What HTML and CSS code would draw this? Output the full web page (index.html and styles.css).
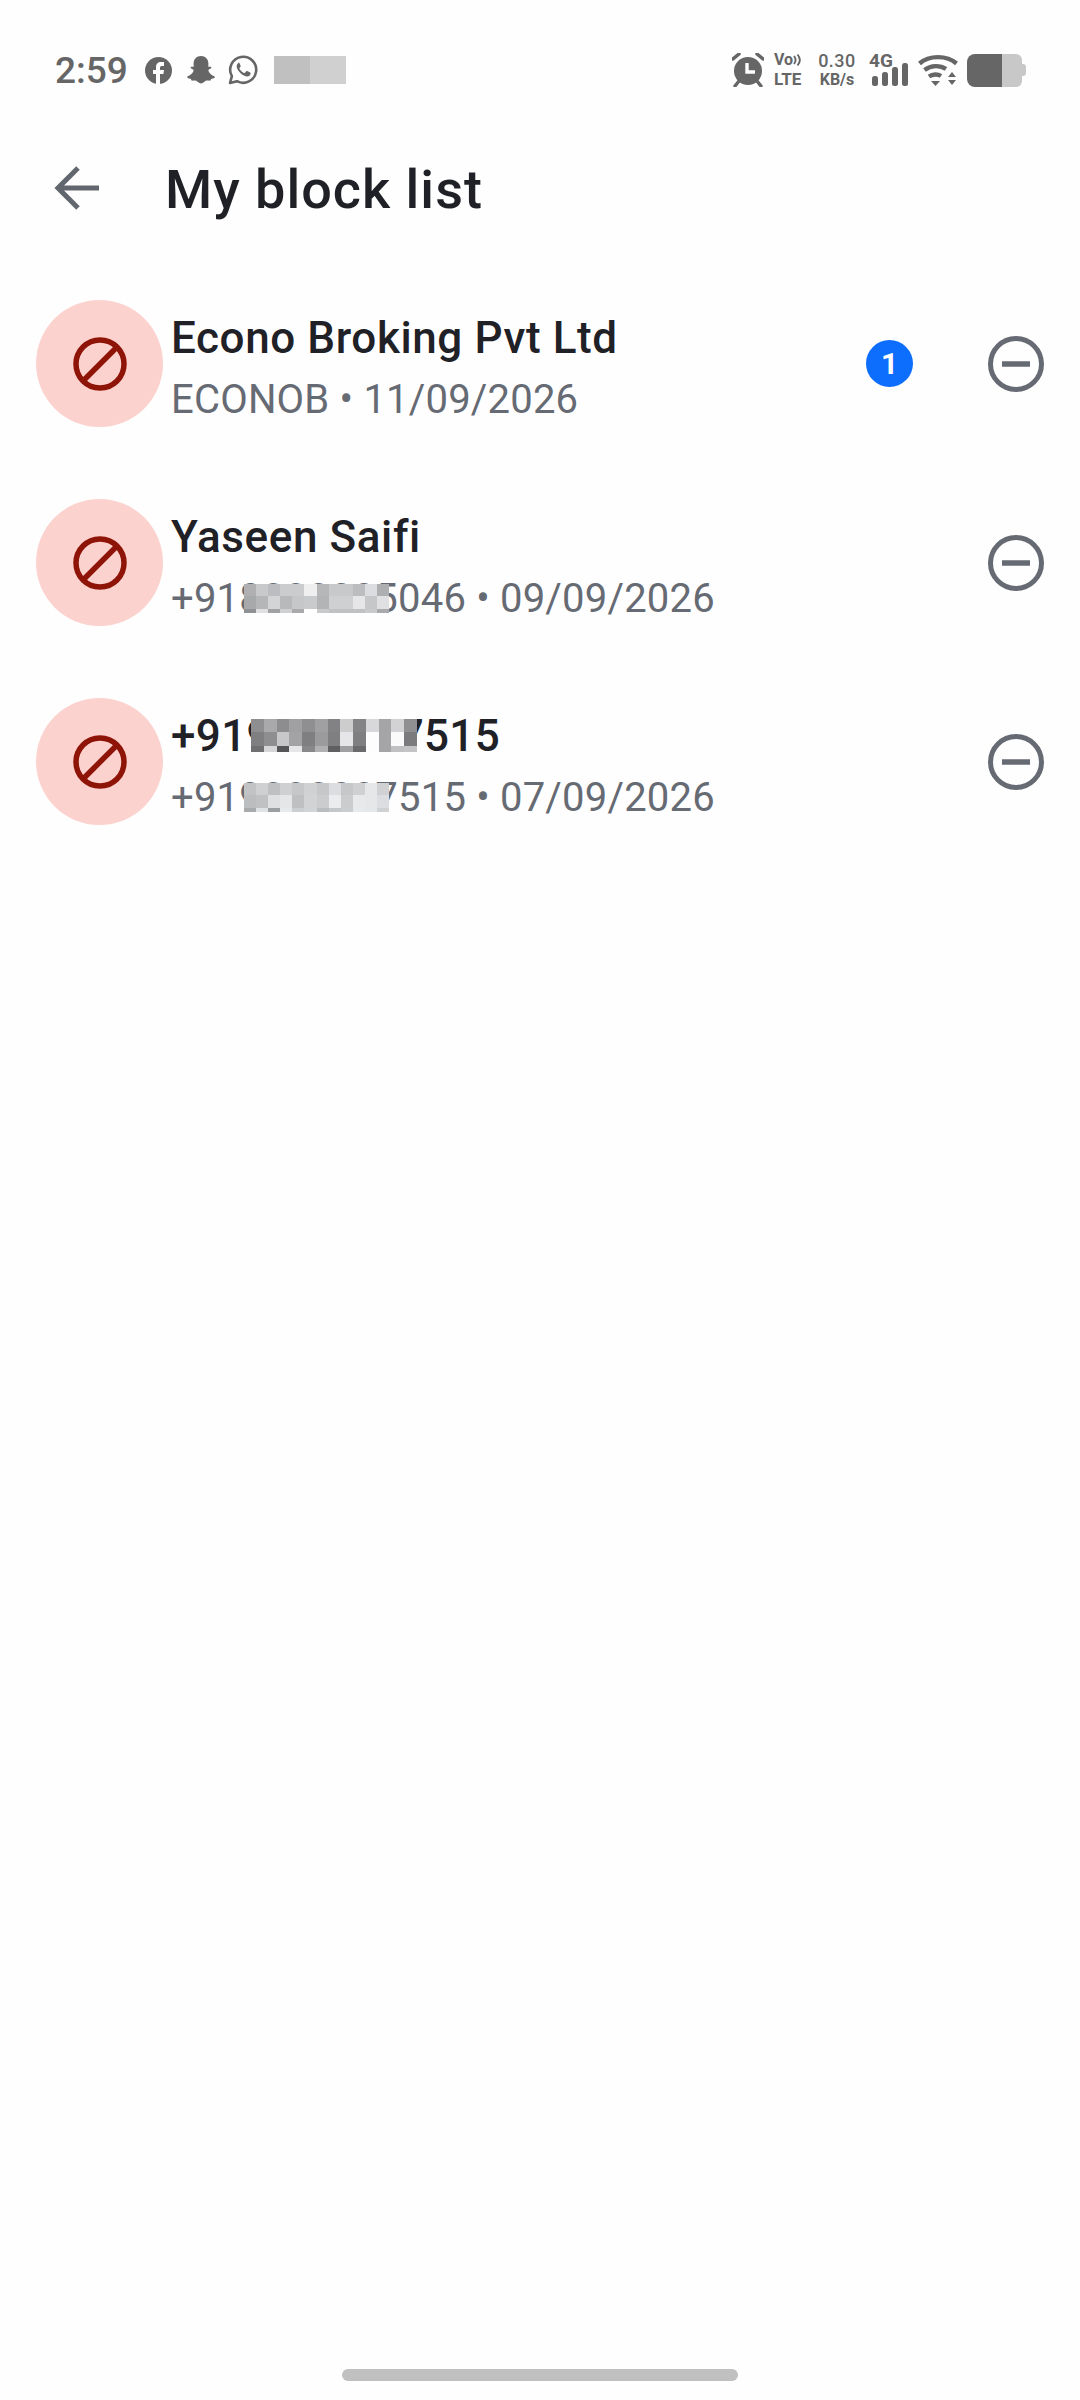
FILE: index.html
```html
<!DOCTYPE html>
<html lang="en">
<head>
    <meta charset="UTF-8">
    <meta name="viewport" content="width=device-width, initial-scale=1.0">
    <title>My block list</title>
    <link rel="stylesheet" href="styles.css">
</head>
<body>

    <div class="status-bar">
        <div class="status-left">
            <span class="time">2:59</span>
            <svg class="icon-fb" width="27" height="27" viewBox="0 0 27 27">
                <circle cx="13.5" cy="13.5" r="13.5" fill="#666"/>
                <path d="M11 27V17H8v-4h3v-3c0-3 2-5 5-5h3v4h-2c-1.300 0-2 .6-2 2v2h4l-.6 4H15v10z" fill="#fff"/>
            </svg>
            <svg class="icon-snap" width="28" height="28" viewBox="0 0 28 28">
                <path d="M14 0c4.500 0 7.400 3.300 7.400 7.500 0 1.300-.1 2.500-.1 3.300.8.300 2-.5 2.700 0 .8.600.3 1.600-.6 2-1 .4-2 .8-2 1.500.3 2.300 3 5 5.800 5.900.8.300.8 1.100.2 1.600-.8.600-2.200.8-3.300 1.100-.4.700-.3 1.600-1 1.700-1.300.2-2.800-.3-4.300.2-1.400.5-2.600 2.700-4.800 2.700s-3.400-2.200-4.800-2.700c-1.500-.5-3-.000-4.300-.2-.7-.1-.6-1-1-1.700-1.100-.3-2.500-.5-3.300-1.100-.6-.5-.6-1.300.2-1.600 2.800-.9 5.500-3.600 5.800-5.900 0-.7-1-1.100-2-1.500-.9-.4-1.400-1.400-.6-2 .7-.5 1.900.3 2.700 0 0-.8-.1-2-.1-3.300C6.600 3.300 9.500 0 14 0z" fill="#666"/>
            </svg>
            <svg class="icon-wa" width="30" height="30" viewBox="0 0 30 30">
                <path d="M2 28l1.900-6.800A13 13 0 1 1 9 26.200z" fill="none" stroke="#666" stroke-width="2.600" stroke-linejoin="round"/>
                <path d="M10.800 7.800c-1 .4-2.300 2-2.100 4 .3 3.600 5.600 9.300 10 9.700 2 .2 3.700-1.200 3.900-2.700.1-.6 0-1-.4-1.200l-3-1.500c-.5-.2-.8-.1-1.100.3l-1.100 1.400c-.3.300-.6.300-1 .2-1.900-.8-3.500-2.300-4.500-4.200-.2-.4-.1-.7.100-.9l.9-1.100c.2-.3.300-.6.100-1l-1.200-2.900c-.3-.6-.8-.6-1.600-.1z" fill="#666"/>
            </svg>
            <div class="status-blur">
                <div class="blur-dark"></div>
                <div class="blur-light"></div>
            </div>
        </div>
        <div class="status-right">
            <svg class="icon-alarm" width="32" height="34" viewBox="0 0 32 34">
                <circle cx="16" cy="18" r="14" fill="#666"/>
                <path d="M15 10v9h8" fill="none" stroke="#fff" stroke-width="3.400"/>
                <path d="M1 6l6-5M31 6l-6-5M3 33l4-5M29 33l-4-5" fill="none" stroke="#666" stroke-width="3.400" stroke-linecap="round"/>
            </svg>
            <div class="volte">
                <div class="volte-top">
                    <span>Vo</span>
                    <svg class="volte-waves" width="9" height="14" viewBox="0 0 9 13">
                        <path d="M1 2.500c2 2.500 2 5.500 0 8M4.500 1c3 3.500 3 7.500 0 11" fill="none" stroke="#666" stroke-width="1.900"/>
                    </svg>
                </div>
                <div class="volte-bottom">LTE</div>
            </div>
            <div class="net-speed">
                <div class="speed-value">0.30</div>
                <div class="speed-unit">KB/s</div>
            </div>
            <div class="signal">
                <span class="signal-label">4G</span>
                <svg class="signal-bars" width="38" height="24" viewBox="0 0 38 24">
                    <rect x="1" y="13" width="6" height="10" rx="2.500" fill="#666"/>
                    <rect x="11" y="9" width="6" height="14" rx="2.500" fill="#666"/>
                    <rect x="21" y="4" width="6" height="19" rx="2.500" fill="#666"/>
                    <rect x="31" y="0" width="6" height="23" rx="2.500" fill="#666"/>
                </svg>
            </div>
            <svg class="icon-wifi" width="40" height="33" viewBox="0 0 40 33">
                <path d="M1.500 9.500C11 1 29 1 38.500 9.500" fill="none" stroke="#666" stroke-width="4.400"/>
                <path d="M6.500 16c6.500-5 15.500-5 21.500-1" fill="none" stroke="#666" stroke-width="4.400"/>
                <path d="M11 22.500c3.500-2.500 9-2.500 12-.5" fill="none" stroke="#666" stroke-width="4.400"/>
                <path d="M13 27h9l-4.500 5z" fill="#666"/>
                <path d="M30 23l4-5 4 5zM30 26h8l-4 5z" fill="#666"/>
            </svg>
            <div class="battery">
                <div class="battery-level"></div>
                <div class="battery-rest"></div>
                <div class="battery-nub"></div>
            </div>
        </div>
    </div>

    <header class="app-bar">
        <svg class="back-arrow" width="46" height="46" viewBox="0 0 46 46">
            <path d="M45 23H5M24 3L4 23l20 20" fill="none" stroke="#62666e" stroke-width="5"/>
        </svg>
        <h1>My block list</h1>
    </header>

    <div class="block-list">
        <div class="block-row">
            <div class="avatar">
                <svg width="54" height="54" viewBox="0 0 54 54">
                    <circle cx="27" cy="27" r="24" fill="none" stroke="#8f1408" stroke-width="5.500"/>
                    <path d="M10 44L44 10" stroke="#8f1408" stroke-width="5.500"/>
                </svg>
            </div>
            <div class="row-text">
                <div class="row-name">Econo Broking Pvt Ltd</div>
                <div class="row-sub">ECONOB • 11/09/2026</div>
            </div>
            <div class="badge">1</div>
            <svg class="unblock" width="56" height="56" viewBox="0 0 56 56">
                <circle cx="28" cy="28" r="25.500" fill="none" stroke="#666a73" stroke-width="5"/>
                <path d="M14 28h28" stroke="#666a73" stroke-width="5.500"/>
            </svg>
        </div>

        <div class="block-row">
            <div class="avatar">
                <svg width="54" height="54" viewBox="0 0 54 54">
                    <circle cx="27" cy="27" r="24" fill="none" stroke="#8f1408" stroke-width="5.500"/>
                    <path d="M10 44L44 10" stroke="#8f1408" stroke-width="5.500"/>
                </svg>
            </div>
            <div class="row-text">
                <div class="row-name">Yaseen Saifi</div>
                <div class="row-sub">
                    <span class="masked">+918000005046
                        <svg class="pixels pixels-sub" viewBox="0 0 12 2.330" preserveAspectRatio="none" shape-rendering="crispEdges">
                            <rect x="0" y="0" width="1" height="1" fill="#b0b0b2"/><rect x="1" y="0" width="1" height="1" fill="#c8c9cb"/><rect x="2" y="0" width="1" height="1" fill="#bcbdc0"/><rect x="3" y="0" width="2" height="1" fill="#cbccce"/><rect x="5" y="0" width="1" height="1" fill="#efefef"/><rect x="6" y="0" width="1" height="1" fill="#b6b7b9"/><rect x="7" y="0" width="2" height="1" fill="#c8c9cb"/><rect x="9" y="0" width="1" height="1" fill="#bcbdbf"/><rect x="10" y="0" width="1" height="1" fill="#dcdde0"/><rect x="11" y="0" width="1" height="1" fill="#aeafb1"/>
                            <rect x="0" y="1" width="1" height="1" fill="#a8a9ab"/><rect x="1" y="1" width="1" height="1" fill="#b5b6b8"/><rect x="2" y="1" width="1" height="1" fill="#d3d4d6"/><rect x="3" y="1" width="1" height="1" fill="#b8b9bb"/><rect x="4" y="1" width="1" height="1" fill="#c6c7c9"/><rect x="5" y="1" width="1" height="1" fill="#c9cacc"/><rect x="6" y="1" width="1" height="1" fill="#b3b4b6"/><rect x="7" y="1" width="2" height="1" fill="#cfd0d2"/><rect x="9" y="1" width="1" height="1" fill="#e6e6e8"/><rect x="10" y="1" width="1" height="1" fill="#c6c7c9"/><rect x="11" y="1" width="1" height="1" fill="#e0e0e2"/>
                            <rect x="0" y="2" width="1" height=".33" fill="#909194"/><rect x="1" y="2" width="1" height=".33" fill="#e0e0e2"/><rect x="2" y="2" width="1" height=".33" fill="#a0a1a3"/><rect x="3" y="2" width="1" height=".33" fill="#cfd0d2"/><rect x="4" y="2" width="1" height=".33" fill="#aaaaac"/><rect x="5" y="2" width="1" height=".33" fill="#ffffff"/><rect x="6" y="2" width="1" height=".33" fill="#c9cacc"/><rect x="7" y="2" width="3" height=".33" fill="#c0c1c3"/><rect x="10" y="2" width="1" height=".33" fill="#c9cacc"/><rect x="11" y="2" width="1" height=".33" fill="#a9aaac"/>
                        </svg>
                    </span> • 09/09/2026
                </div>
            </div>
            <svg class="unblock" width="56" height="56" viewBox="0 0 56 56">
                <circle cx="28" cy="28" r="25.500" fill="none" stroke="#666a73" stroke-width="5"/>
                <path d="M14 28h28" stroke="#666a73" stroke-width="5.500"/>
            </svg>
        </div>

        <div class="block-row">
            <div class="avatar">
                <svg width="54" height="54" viewBox="0 0 54 54">
                    <circle cx="27" cy="27" r="24" fill="none" stroke="#8f1408" stroke-width="5.500"/>
                    <path d="M10 44L44 10" stroke="#8f1408" stroke-width="5.500"/>
                </svg>
            </div>
            <div class="row-text">
                <div class="row-name">
                    <span class="masked">+919000007515
                        <svg class="pixels pixels-name" viewBox="0 0 13 2.460" preserveAspectRatio="none" shape-rendering="crispEdges">
                            <rect x="0" y="0" width="1" height="1" fill="#8e8e90"/><rect x="1" y="0" width="1" height="1" fill="#a9a9ab"/><rect x="2" y="0" width="1" height="1" fill="#8d8d8f"/><rect x="3" y="0" width="1" height="1" fill="#a0a0a2"/><rect x="4" y="0" width="1" height="1" fill="#8f8f91"/><rect x="5" y="0" width="1" height="1" fill="#a0a0a2"/><rect x="6" y="0" width="1" height="1" fill="#828284"/><rect x="7" y="0" width="1" height="1" fill="#cdcdcd"/><rect x="8" y="0" width="1" height="1" fill="#848486"/><rect x="9" y="0" width="1" height="1" fill="#d8d8da"/><rect x="10" y="0" width="1" height="1" fill="#a5a5a7"/><rect x="11" y="0" width="1" height="1" fill="#d2d2d4"/><rect x="12" y="0" width="1" height="1" fill="#909092"/>
                            <rect x="0" y="1" width="1" height="1" fill="#7f7f81"/><rect x="1" y="1" width="1" height="1" fill="#8e8e90"/><rect x="2" y="1" width="1" height="1" fill="#c7c7c9"/><rect x="3" y="1" width="1" height="1" fill="#a3a3a5"/><rect x="4" y="1" width="1" height="1" fill="#7f7f81"/><rect x="5" y="1" width="1" height="1" fill="#9b9b9d"/><rect x="6" y="1" width="1" height="1" fill="#7f7f81"/><rect x="7" y="1" width="1" height="1" fill="#e6e6e8"/><rect x="8" y="1" width="1" height="1" fill="#7f7f81"/><rect x="9" y="1" width="1" height="1" fill="#fdfdfd"/><rect x="10" y="1" width="1" height="1" fill="#a5a5a7"/><rect x="11" y="1" width="1" height="1" fill="#fafafa"/><rect x="12" y="1" width="1" height="1" fill="#7b7b7d"/>
                            <rect x="0" y="2" width="1" height=".46" fill="#6f6f71"/><rect x="1" y="2" width="1" height=".46" fill="#d6d6d8"/><rect x="2" y="2" width="1" height=".46" fill="#555557"/><rect x="3" y="2" width="1" height=".46" fill="#e6e6e8"/><rect x="4" y="2" width="1" height=".46" fill="#88888a"/><rect x="5" y="2" width="1" height=".46" fill="#b0b0b2"/><rect x="6" y="2" width="1" height=".46" fill="#5f5f61"/><rect x="7" y="2" width="1" height=".46" fill="#a0a0a2"/><rect x="8" y="2" width="1" height=".46" fill="#6a6a6c"/><rect x="9" y="2" width="1" height=".46" fill="#fdfdfd"/><rect x="10" y="2" width="1" height=".46" fill="#a5a5a7"/><rect x="11" y="2" width="1" height=".46" fill="#c0c0c2"/><rect x="12" y="2" width="1" height=".46" fill="#c4c4c6"/>
                        </svg>
                    </span>
                </div>
                <div class="row-sub">
                    <span class="masked">+919000007515
                        <svg class="pixels pixels-sub" viewBox="0 0 12 2.330" preserveAspectRatio="none" shape-rendering="crispEdges">
                            <rect x="0" y="0" width="1" height="1" fill="#c2c3c5"/><rect x="1" y="0" width="1" height="1" fill="#cfd0d2"/><rect x="2" y="0" width="1" height="1" fill="#bfc0c2"/><rect x="3" y="0" width="1" height="1" fill="#cfd0d2"/><rect x="4" y="0" width="1" height="1" fill="#c6c7c9"/><rect x="5" y="0" width="1" height="1" fill="#d0d1d3"/><rect x="6" y="0" width="1" height="1" fill="#c6c7c9"/><rect x="7" y="0" width="1" height="1" fill="#dcdde0"/><rect x="8" y="0" width="1" height="1" fill="#c6c7c9"/><rect x="9" y="0" width="1" height="1" fill="#cfd0d2"/><rect x="10" y="0" width="1" height="1" fill="#e6e7e9"/><rect x="11" y="0" width="1" height="1" fill="#d0d1d3"/>
                            <rect x="0" y="1" width="1" height="1" fill="#bcbdbf"/><rect x="1" y="1" width="1" height="1" fill="#c0c1c3"/><rect x="2" y="1" width="1" height="1" fill="#dfe0e2"/><rect x="3" y="1" width="1" height="1" fill="#e5e6e8"/><rect x="4" y="1" width="1" height="1" fill="#bfc0c2"/><rect x="5" y="1" width="1" height="1" fill="#d2d3d5"/><rect x="6" y="1" width="1" height="1" fill="#cbccce"/><rect x="7" y="1" width="1" height="1" fill="#ebecee"/><rect x="8" y="1" width="1" height="1" fill="#cbccce"/><rect x="9" y="1" width="1" height="1" fill="#e8e9eb"/><rect x="10" y="1" width="1" height="1" fill="#e6e7e9"/><rect x="11" y="1" width="1" height="1" fill="#dcdde0"/>
                            <rect x="0" y="2" width="1" height=".33" fill="#a9aaac"/><rect x="1" y="2" width="1" height=".33" fill="#e0e1e3"/><rect x="2" y="2" width="1" height=".33" fill="#9d9ea0"/><rect x="3" y="2" width="1" height=".33" fill="#e8e9eb"/><rect x="4" y="2" width="1" height=".33" fill="#cdced0"/><rect x="5" y="2" width="1" height=".33" fill="#d2d3d5"/><rect x="6" y="2" width="1" height=".33" fill="#bbbcbe"/><rect x="7" y="2" width="1" height=".33" fill="#c6c7c9"/><rect x="8" y="2" width="1" height=".33" fill="#cbccce"/><rect x="9" y="2" width="1" height=".33" fill="#e8e9eb"/><rect x="10" y="2" width="1" height=".33" fill="#e6e7e9"/><rect x="11" y="2" width="1" height=".33" fill="#d0d1d3"/>
                        </svg>
                    </span> • 07/09/2026
                </div>
            </div>
            <svg class="unblock" width="56" height="56" viewBox="0 0 56 56">
                <circle cx="28" cy="28" r="25.500" fill="none" stroke="#666a73" stroke-width="5"/>
                <path d="M14 28h28" stroke="#666a73" stroke-width="5.500"/>
            </svg>
        </div>
    </div>

    <div class="home-bar"></div>

</body>
</html>
```
FILE: styles.css
```css
body {
    font-family: Roboto, "Liberation Sans", sans-serif;
    background-color: #fefefe;
    margin: 0;
    padding: 0;
    height: 2400px;
    display: flex;
    flex-direction: column;
    overflow: hidden;
}

.status-bar {
    display: flex;
    justify-content: space-between;
    align-items: center;
    height: 140px;
    padding: 0 54px 0 55px;
    color: #666;
    flex-shrink: 0;
}

.status-left {
    display: flex;
    align-items: center;
}

.time {
    font-size: 37px;
    font-weight: 500;
    margin-right: 17px;
}

.icon-fb {
    margin-right: 15px;
}

.icon-snap {
    margin-right: 13px;
}

.icon-wa {
    margin-right: 16px;
}

.status-blur {
    display: flex;
    height: 28px;
}

.blur-dark {
    width: 36px;
    background: #c0c0c0;
}

.blur-light {
    width: 36px;
    background: #d0d0d0;
}

.status-right {
    display: flex;
    align-items: center;
}

.icon-alarm {
    margin-right: 10px;
}

.volte {
    width: 29px;
    margin-right: 15px;
    font-size: 17px;
    font-weight: 700;
    line-height: 17px;
}

.volte-top {
    display: flex;
    align-items: center;
    font-size: 16px;
    line-height: 14px;
    margin-bottom: 4px;
}

.volte-waves {
    flex-shrink: 0;
}

.net-speed {
    width: 38px;
    margin-right: 15px;
    text-align: center;
    line-height: 19px;
}

.speed-value {
    font-size: 18px;
    font-weight: 500;
    letter-spacing: .5px;
}

.speed-unit {
    font-size: 16px;
    font-weight: 700;
}

.signal {
    position: relative;
    width: 38px;
    height: 34px;
    margin-right: 9px;
    display: flex;
    align-items: flex-end;
}

.signal-label {
    position: absolute;
    left: -2px;
    top: -4px;
    font-size: 19px;
    font-weight: 700;
}

.icon-wifi {
    margin-right: 9px;
}

.battery {
    display: flex;
    align-items: center;
    height: 33px;
}

.battery-level {
    width: 35px;
    height: 33px;
    background: #666;
    border-radius: 8px 0 0 8px;
}

.battery-rest {
    width: 20px;
    height: 33px;
    background: #c8c8c8;
    border-radius: 0 6px 6px 0;
}

.battery-nub {
    width: 4px;
    height: 12px;
    background: #c8c8c8;
    border-radius: 0 3px 3px 0;
}

.app-bar {
    display: flex;
    align-items: center;
    height: 96px;
    padding-left: 54px;
    flex-shrink: 0;
}

.app-bar h1 {
    margin: 3px 0 0 65px;
    font-size: 54px;
    font-weight: 500;
    letter-spacing: 1px;
    color: #1f2126;
}

.block-list {
    padding-top: 64px;
}

.block-row {
    display: flex;
    align-items: center;
    height: 127px;
    padding: 0 36px;
    margin-bottom: 72px;
}

.avatar {
    width: 127px;
    height: 127px;
    border-radius: 50%;
    background: #fcd2ce;
    display: flex;
    align-items: center;
    justify-content: center;
    flex-shrink: 0;
}

.row-text {
    flex: 1;
    margin-left: 8px;
    padding-top: 10px;
}

.row-name {
    font-size: 44px;
    font-weight: 500;
    letter-spacing: .6px;
    line-height: 60px;
    color: #1f2126;
}

.row-name .masked {
    letter-spacing: .35px;
}

.row-sub {
    margin-top: 2px;
    font-size: 40px;
    letter-spacing: .2px;
    line-height: 60px;
    color: #666a73;
}

.masked {
    position: relative;
}

.pixels {
    position: absolute;
    display: block;
}

.pixels-sub {
    left: 73px;
    top: 9px;
    width: 145px;
    height: 29px;
}

.pixels-name {
    left: 80px;
    top: 9px;
    width: 166px;
    height: 33px;
}

.badge {
    width: 47px;
    height: 47px;
    line-height: 47px;
    margin-right: 75px;
    border-radius: 50%;
    background: #0d6efd;
    color: #fff;
    font-size: 30px;
    font-weight: 700;
    text-align: center;
}

.home-bar {
    width: 396px;
    height: 12px;
    margin: auto auto 19px;
    background: #c0c0c0;
    border-radius: 6px;
    flex-shrink: 0;
}
```
